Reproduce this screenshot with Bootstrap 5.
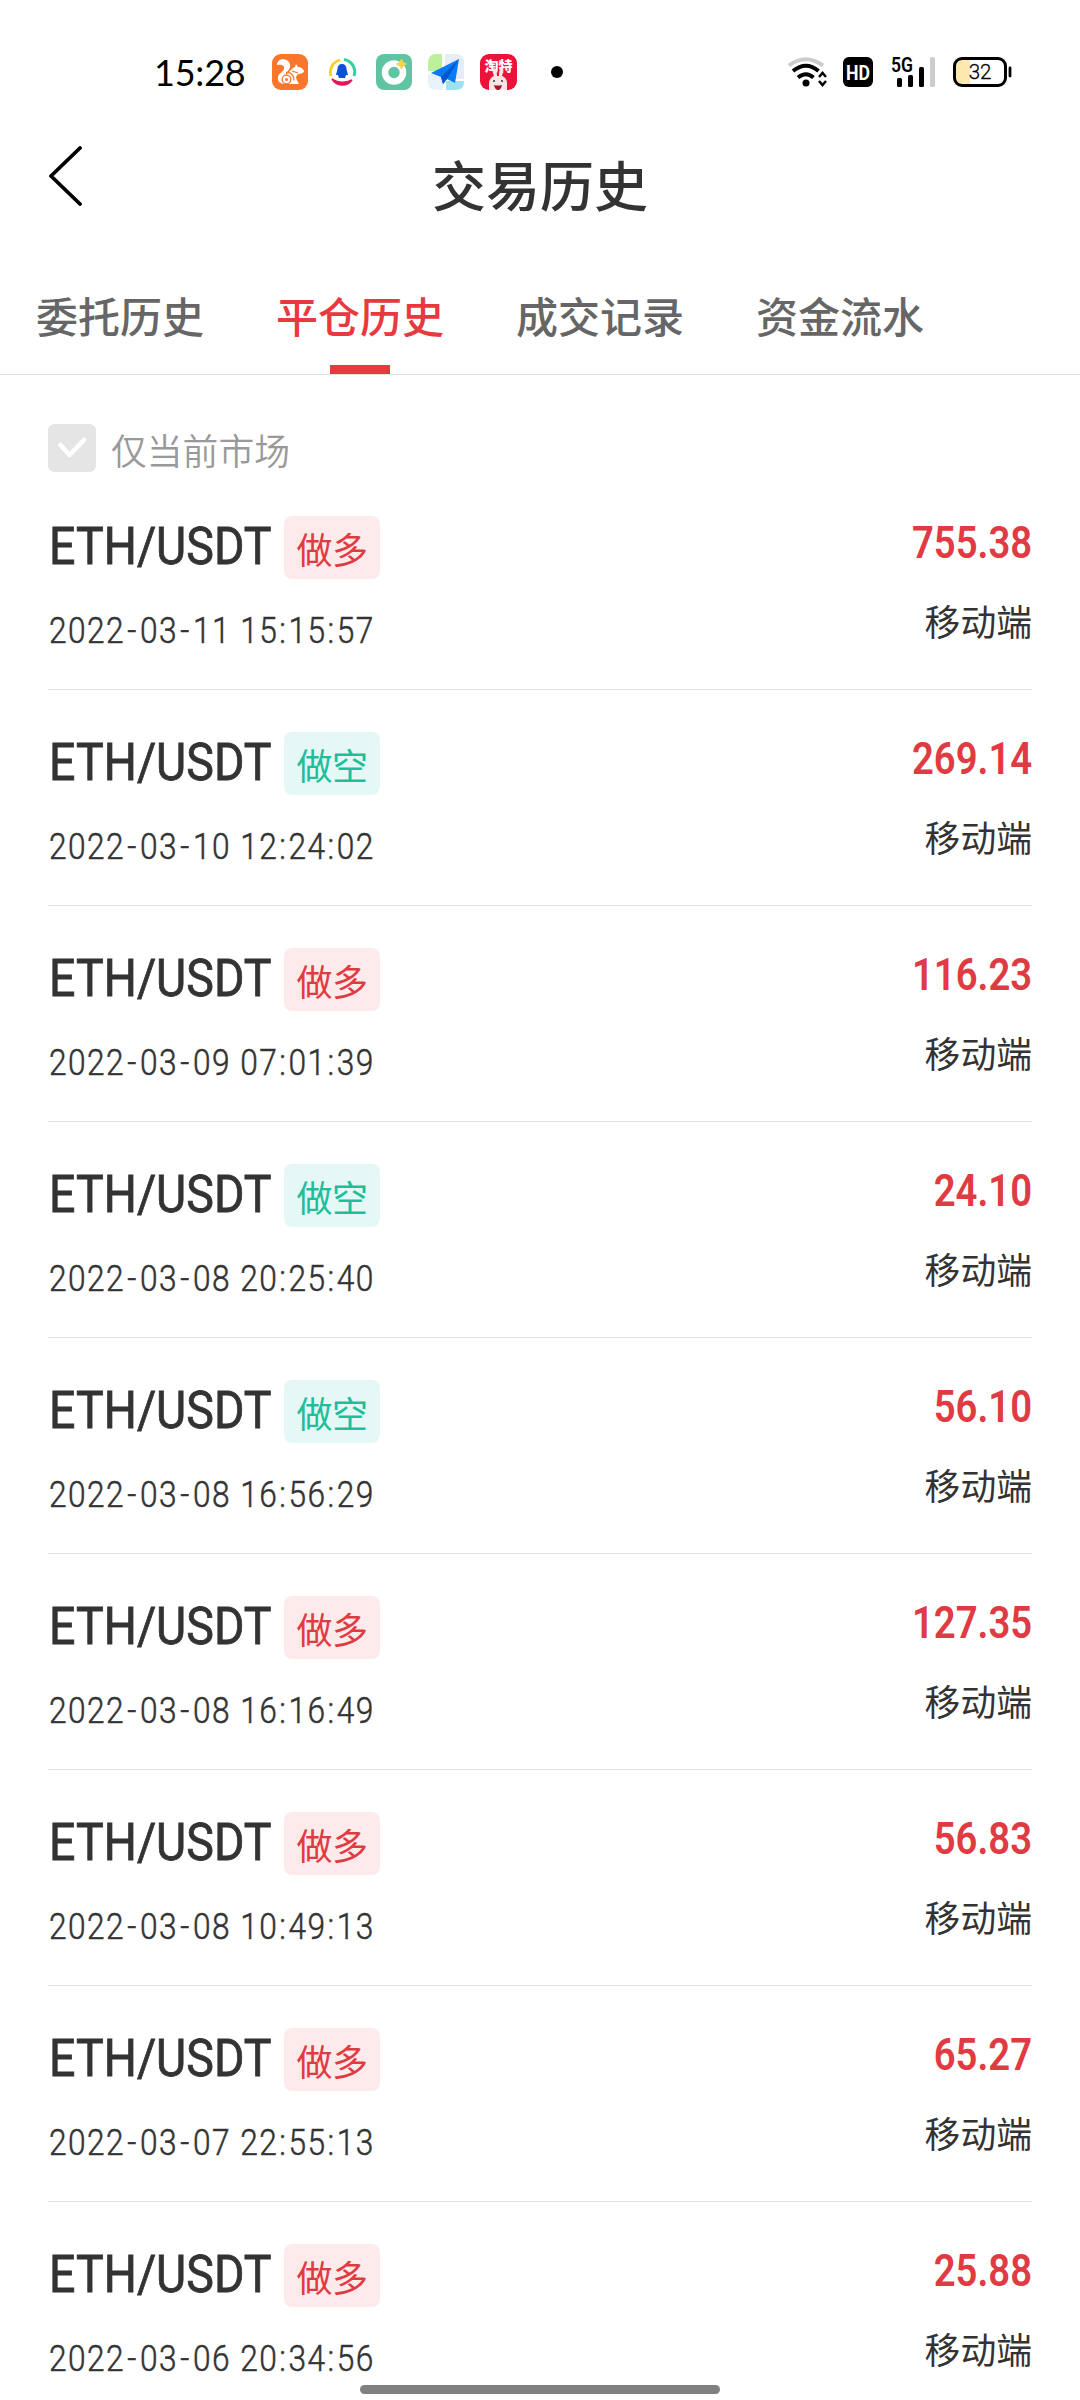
<!DOCTYPE html>
<html lang="zh-CN">
<head>
<meta charset="utf-8">
<meta name="viewport" content="width=device-width, initial-scale=1">
<title>交易历史</title>
<link href="https://cdn.jsdelivr.net/npm/bootstrap@5.3.0/dist/css/bootstrap.min.css" rel="stylesheet">
<style>
  body { font-family: Roboto, "Noto Sans CJK SC", sans-serif; color: #333; background: #fff; }
  .screen { width: 1080px; height: 2400px; }
  .status-bar { height: 144px; padding-left: 154px; padding-right: 68px; }
  .status-bar svg { display: block; flex: none; }
  .clock { font: 400 36px/44px Lato, sans-serif; color: #000; width: 118px; letter-spacing: -.2px; margin-top: -1px; }
  .title-bar { height: 120px; margin-top: -16px; padding: 0 47px; }
  .title-bar h1 { font-size: 54px; font-weight: 500; line-height: 60px; margin: 2px 0 0; }
  .back-link { width: 60px; line-height: 0; margin-top: -24px; }
  .tab-strip { height: 127px; border-bottom: 1px solid #e0e0e0; flex-wrap: nowrap; }
  .tab-strip .nav-link { padding: 0 36px; height: 126px; line-height: 142px; font-size: 42px; font-weight: 500; color: #666; border: 0; border-radius: 0; }
  .tab-strip .nav-link.active { color: #e8393e; }
  .tab-strip .nav-link.active::after { content: ""; display: block; width: 60px; height: 9px; background: #e8393e; margin: -25px auto 0; }
  .market-filter { height: 99px; padding: 49px 0 0 48px; }
  .check-tile { width: 48px; height: 48px; border-radius: 6px; background: #e5e5e5; line-height: 0; }
  .filter-text { font-size: 35.8px; line-height: 48px; color: #999; margin-left: 15px; margin-top: 5px; font-weight: 350; }
  .trades { margin: 0 48px; }
  .trade { height: 216px; border-bottom: 1px solid #e2e2e2; }
  .trade-main { padding-top: 42px; }
  .pair-line { height: 63px; }
  .pair-box { width: 236px; padding-left: 1px; margin-top: -2px; }
  .pair { display: inline-block; font-size: 52px; font-weight: 400; -webkit-text-stroke: .8px #333; line-height: 60px; white-space: nowrap; transform: scaleX(.895); transform-origin: 0 50%; }
  .side-tag { width: 96px; height: 63px; border-radius: 8px; font-size: 36px; line-height: 72px; text-align: center; letter-spacing: -.4px; }
  .side-long { background: #fdeaeb; color: #e03a42; }
  .side-short { background: #e6f8f6; color: #1dbf9b; }
  .stamp { font-size: 36px; line-height: 50px; margin-top: 27px; padding-left: 1px; white-space: nowrap; letter-spacing: 1.65px; transform: scaleX(.88); transform-origin: 0 50%; font-weight: 300; -webkit-text-stroke: .5px #333; }
  .stamp .dash { padding: 0 2.5px; }
  .stamp .colon { padding: 0 1.2px; }
  .trade-side { padding-top: 43px; }
  .amount { font-size: 44px; font-weight: 600; line-height: 53px; color: #e03a42; transform: scaleX(.87); transform-origin: 100% 50%; }
  .device { font-size: 35.8px; line-height: 48px; margin-top: 30px; }
  .home-pill { width: 360px; height: 9px; border-radius: 5px; background: #808080; bottom: 6px; left: 360px; }
</style>
<script src="https://cdn.jsdelivr.net/npm/bootstrap@5.3.0/dist/js/bootstrap.bundle.min.js"></script>
</head>
<body>
<div class="screen position-relative overflow-hidden">
  <header class="status-bar d-flex justify-content-between align-items-center">
    <div class="d-flex align-items-center">
      <span class="clock">15:28</span>
      <svg width="36" height="36" viewBox="0 0 36 36"><rect width="36" height="36" rx="9" fill="#f9762d"/><path d="M5 11C5 5 12 4 16 7c4 4 2 8-1 11-2 2-1 3-1 3 4-4 6-7 9-8l1-3 2 3c3 0 5 2 6 4 0 2-3 3-6 3l-2 3c0 2 2 5 3 7H13c-5 0-8-3-7-7 1-4 5-5 6-8 1-3-2-5-7-4z" fill="#fff"/><circle cx="14.500" cy="25.500" r="4.300" fill="none" stroke="#f9762d" stroke-width="1.300"/><circle cx="14.500" cy="25.500" r="1.500" fill="#f9762d"/><path d="M14 18.500c5-1 8 3 8 8M20 17l6 2" stroke="#f9762d" stroke-width="1.200" fill="none"/></svg>
      <svg class="ms-3" width="36" height="30" viewBox="-4 0 36 30"><path d="M3 19A12.500 12.500 0 0 1 12 3" stroke="#f5d21f" stroke-width="2.800" fill="none"/><path d="M16 2.500A12.500 12.500 0 0 1 26 19" stroke="#36cfa0" stroke-width="3" fill="none"/><path d="M4 22a12 12 0 0 0 20 1c-5 3-14 3-20-1z" fill="#e5155c" stroke="#e5155c" stroke-width="1.500"/><path d="M14 7c-3 0-4.500 2-4.500 5L8 18h2l1 3h6l1-3h2l-1.500-6c0-3-1.500-5-4.500-5z" fill="#0b50d8"/></svg>
      <svg class="ms-3" width="36" height="36" viewBox="0 0 36 36"><rect width="36" height="36" rx="8" fill="#5fc4a1"/><circle cx="18" cy="18.500" r="9" fill="none" stroke="#fff" stroke-width="6.500"/><path d="M25.500 5l1.600 3.400 3.400 1.600-3.400 1.600-1.600 3.400-1.600-3.400-3.400-1.600 3.400-1.600z" fill="#fbd24d" stroke="#fbd24d"/></svg>
      <svg class="ms-3" width="36" height="36" viewBox="0 0 36 36"><path d="M8 0h6v17H0V9Q0 0 8 0z" fill="#bdf09b"/><path d="M17 0h11q8 0 8 8v17H17z" fill="#e6ecf8"/><path d="M0 20h15v16H8q-8 0-8-8z" fill="#e9f2fc"/><path d="M18 27h18v1q0 8-8 8H18z" fill="#a0e1f0"/><path d="M31 5L3 19l10 4 2 7 4-5 8 4z" fill="#087bf5"/><path d="M31 5L13 23l2 7 4-5z" fill="#0458ce"/></svg>
      <svg class="ms-3" width="37" height="36" viewBox="0 0 37 36"><rect width="37" height="36" rx="9" fill="#ec1239"/><text x="18.500" y="17" text-anchor="middle" font-family="Noto Sans CJK SC" font-weight="900" font-size="14" fill="#fff">淘特</text><path d="M9 36V29c0-3 2-6 5-7-2-5-1.500-8 0-8s3 3 3 8h2c0-5 1-9 3-8s1 5 0 8c3 1 5 4 5 7v7z" fill="#fce4e5"/><circle cx="14" cy="27" r="1" fill="#333"/><circle cx="22" cy="27" r="1" fill="#333"/><path d="M14 31q4 1 8 0-1 5-4 5t-4-5z" fill="#a1162d"/></svg>
      <svg class="ms-3" width="30" height="12" viewBox="-18 0 30 12"><circle cx="6" cy="6" r="6"/></svg>
    </div>
    <div class="d-flex align-items-center">
      <svg width="41" height="32" viewBox="0 0 41 32" fill="none"><path d="M2 9.500Q18.500-3 36 9.500" stroke="#ccc" stroke-width="4"/><path d="M6 15Q19 4.500 31.500 15M11 21.500Q19 15 26.500 21.500" stroke="#000" stroke-width="4"/><circle cx="19" cy="27" r="3.500" fill="#000"/><path d="M32 21l3.500-4 3.500 4M32 25l3.500 4 3.500-4" stroke="#000" stroke-width="2.500"/></svg>
      <svg width="45" height="30" viewBox="-15 0 45 30"><rect width="30" height="30" rx="6"/><text x="15" y="22.500" text-anchor="middle" font-family="Roboto" font-weight="700" font-size="21" textLength="24" lengthAdjust="spacingAndGlyphs" fill="#fff">HD</text></svg>
      <svg width="62" height="38" viewBox="-17 -4 62 38"><text x="1" y="14.500" font-family="Roboto" font-weight="600" font-size="19.500" textLength="22" lengthAdjust="spacingAndGlyphs">5G</text><rect x="7" y="21" width="5" height="9" rx="1.500"/><rect x="18" y="18" width="5" height="12" rx="1.500"/><rect x="29" y="10" width="5" height="20" rx="1.500"/><rect x="40" y="0" width="5" height="30" rx="1.500" fill="#ccc"/></svg>
      <svg width="77" height="30" viewBox="-18 0 77 30"><path d="M9 3h8v24H9q-6 0-6-6V9q0-6 6-6z" fill="#fde9af"/><rect x="1.500" y="1.500" width="51" height="27" rx="7.500" fill="none" stroke="#000" stroke-width="3"/><path d="M57 11v8" stroke="#000" stroke-width="2.800" stroke-linecap="round"/><text x="27" y="22" text-anchor="middle" font-family="Roboto" font-weight="300" font-size="20.500" stroke="#000" stroke-width=".3">32</text></svg>
    </div>
  </header>

  <div class="title-bar d-flex align-items-center justify-content-between">
    <a class="back-link" href="#" aria-label="返回"><svg width="38" height="60" viewBox="0 0 38 60" fill="none" stroke="#000" stroke-width="3.800" stroke-linecap="round" stroke-linejoin="round"><path d="M33 2L4 30 33 58" /></svg></a>
    <h1>交易历史</h1>
    <span class="back-link"></span>
  </div>

  <nav class="nav tab-strip">
    <a class="nav-link" href="#">委托历史</a>
    <a class="nav-link active" href="#">平仓历史</a>
    <a class="nav-link" href="#">成交记录</a>
    <a class="nav-link" href="#">资金流水</a>
  </nav>

  <div class="market-filter d-flex">
    <span class="check-tile"><svg width="48" height="48" viewBox="0 0 48 48" fill="none" stroke="#fff" stroke-width="4.500" stroke-linecap="round" stroke-linejoin="round"><path d="M12.500 21L21.500 31 36 16"/></svg></span>
    <span class="filter-text">仅当前市场</span>
  </div>

  <main class="trades" id="trades"></main>
  <div class="home-pill position-absolute"></div>
</div>
<script>
  const trades = [
    ['long', '2022-03-11 15:15:57', '755.38'],
    ['short', '2022-03-10 12:24:02', '269.14'],
    ['long', '2022-03-09 07:01:39', '116.23'],
    ['short', '2022-03-08 20:25:40', '24.10'],
    ['short', '2022-03-08 16:56:29', '56.10'],
    ['long', '2022-03-08 16:16:49', '127.35'],
    ['long', '2022-03-08 10:49:13', '56.83'],
    ['long', '2022-03-07 22:55:13', '65.27'],
    ['long', '2022-03-06 20:34:56', '25.88']
  ];
  const names = { long: '做多', short: '做空' };
  const spaced = t => t.replace(/[-:]/g, c => `<span class="${c === '-' ? 'dash' : 'colon'}">${c}</span>`);
  document.getElementById('trades').innerHTML = trades.map(([side, time, amount]) => `
    <article class="trade d-flex justify-content-between">
      <div class="trade-main">
        <div class="pair-line d-flex align-items-center">
          <div class="pair-box"><span class="pair">ETH/USDT</span></div>
          <span class="side-tag side-${side}">${names[side]}</span>
        </div>
        <div class="stamp">${spaced(time)}</div>
      </div>
      <div class="trade-side text-end">
        <div class="amount">${amount}</div>
        <div class="device">移动端</div>
      </div>
    </article>`).join('');
</script>
</body>
</html>
